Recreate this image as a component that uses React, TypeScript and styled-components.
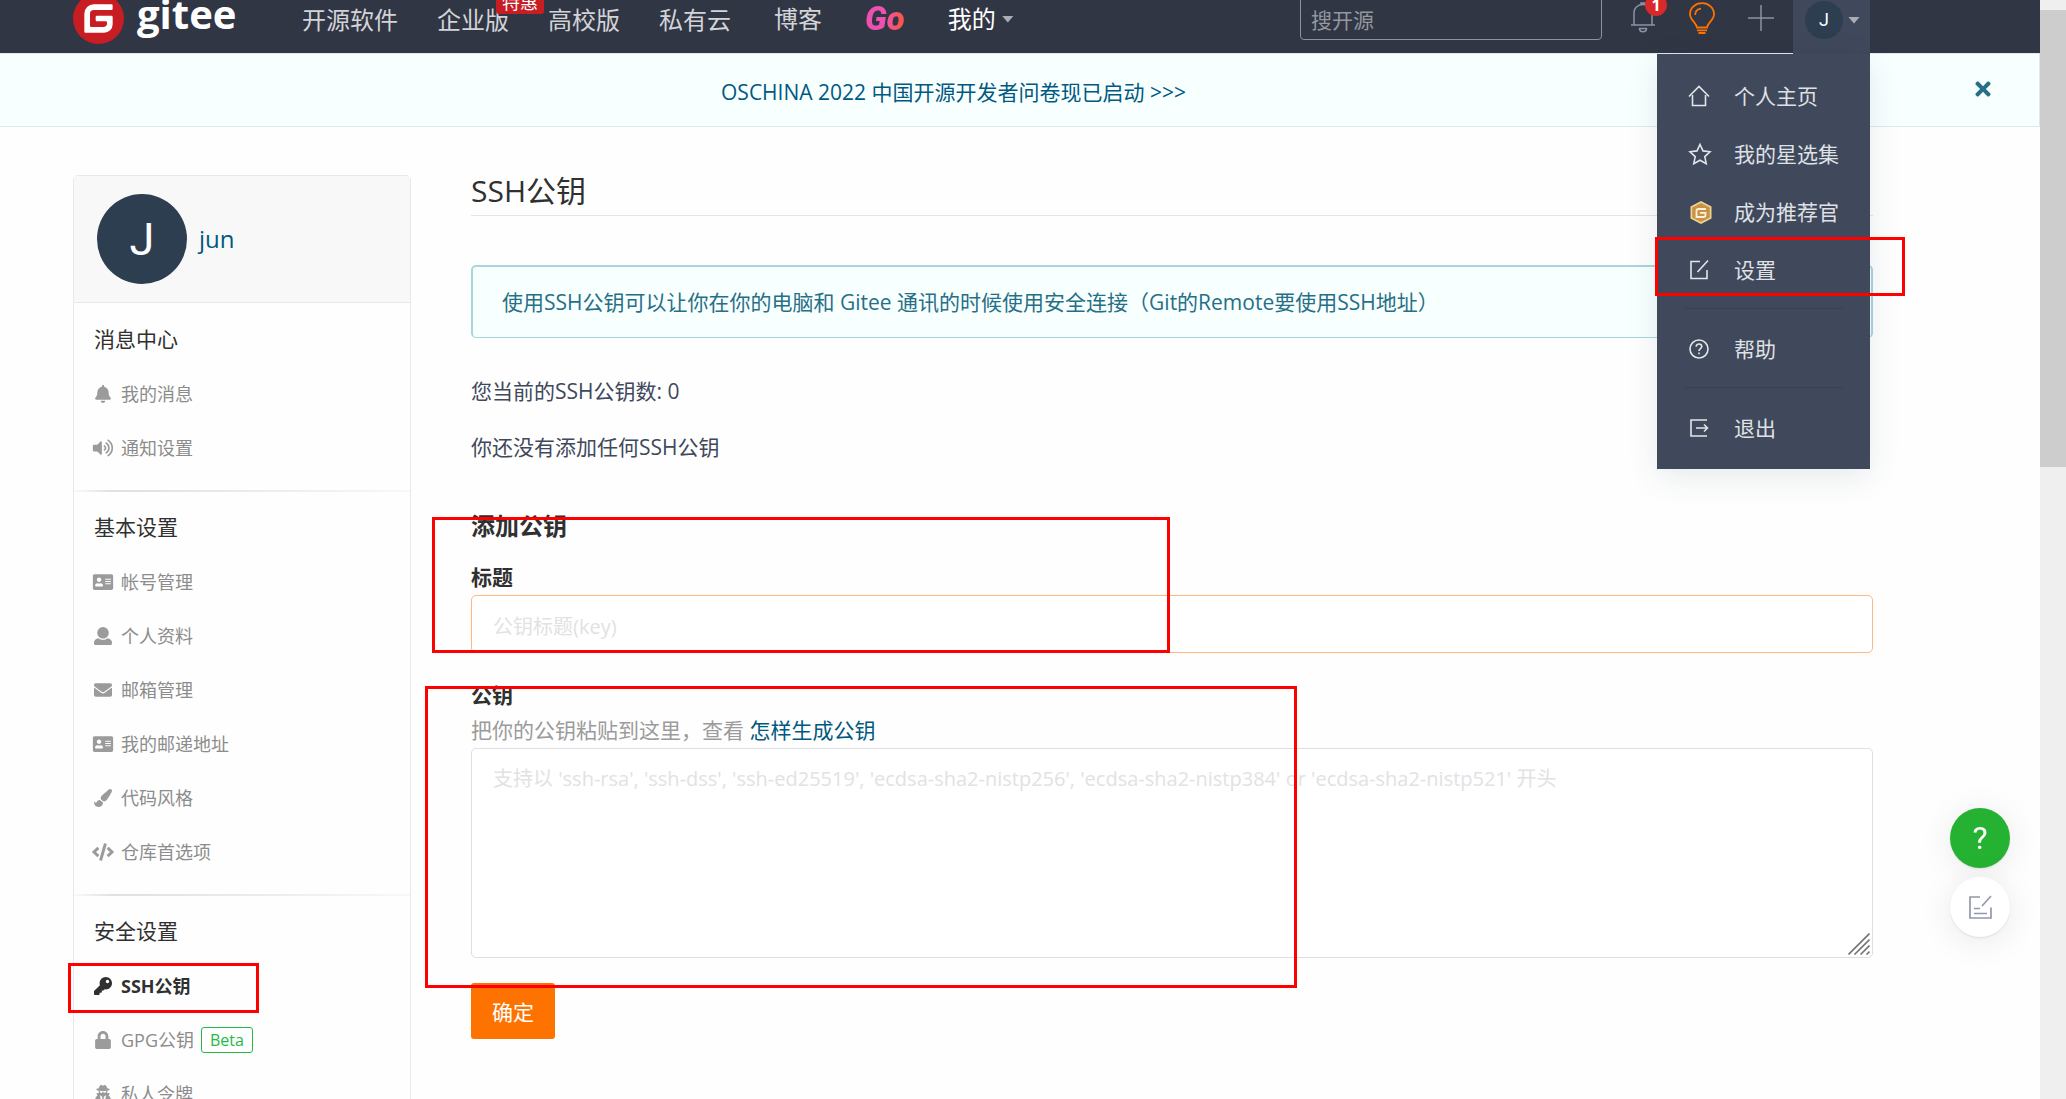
import React from 'react';
import styled, { createGlobalStyle, css } from 'styled-components';
import {
  FaBell,
  FaVolumeUp,
  FaAddressCard,
  FaEnvelope,
  FaPaintBrush,
  FaCode,
  FaKey,
  FaLock,
  FaUserSecret,
  FaTimes,
} from 'react-icons/fa';

const GlobalStyle = createGlobalStyle`
  *, *::before, *::after { box-sizing: border-box; }
  html, body { margin: 0; }
  body {
    background: #fefefe;
    color: #40485b;
    font-family: "Open Sans", "Noto Sans CJK SC", sans-serif;
    font-size: 21px;
    line-height: 32px;
    overflow: hidden;
  }
  a { color: inherit; text-decoration: none; }
  button, input, textarea { font: inherit; }
  h1, h2, h3, p, ul { margin: 0; padding: 0; }
  ul { list-style: none; }
`;

const Window = styled.div`
  display: flex;
  height: 100vh;
  overflow: hidden;
`;

const Page = styled.div`
  flex: 1;
  min-width: 0;
  height: 100%;
  overflow: hidden;
`;

/* ---------- scroll bar ---------- */

const ScrollTrack = styled.div`
  width: 26px;
  flex: none;
  background: #efefef;
  padding-top: 10px;
`;

const ScrollThumb = styled.div`
  height: 457px;
  background: #cdcdcd;
`;

/* ---------- header ---------- */

const Header = styled.header`
  height: 53px;
  padding: 0 170px 0 73px;
  display: flex;
  align-items: flex-end;
  background: #313644;
`;

const HeaderRow = styled.div`
  flex: 1;
  height: 70px;
  display: flex;
  align-items: center;
`;

const Brand = styled.a`
  display: flex;
  align-items: center;
  gap: 13px;
  width: 229px;
  color: #fff;
  font-weight: 700;
  font-size: 40px;
  line-height: 54px;

  svg { width: 51px; height: 51px; }
  span { padding-bottom: 8px; }
`;

const NavGroup = styled.nav<{ $gap: number }>`
  display: flex;
  align-items: center;
  gap: ${(p) => p.$gap}px;
  padding-top: 2px;
`;

const NavLink = styled.a<{ $active?: boolean }>`
  position: relative;
  display: flex;
  align-items: center;
  gap: 6px;
  font-size: 24px;
  line-height: 36px;
  white-space: nowrap;
  color: ${(p) => (p.$active ? '#fff' : '#d2d4d8')};
`;

const Promo = styled.span`
  position: absolute;
  right: -35px;
  top: -12px;
  padding: 0 6px;
  border-radius: 3px;
  background: #c71d23;
  color: #fff;
  font-size: 18px;
  line-height: 24px;
`;

const GoLink = styled.a`
  font-family: Roboto, sans-serif;
  font-style: italic;
  font-weight: 900;
  font-size: 33px;
  line-height: 36px;
  color: transparent;
  background: linear-gradient(95deg, #ee50b0 50%, #f8574a 90%);
  background-clip: text;
  -webkit-background-clip: text;
`;

const Caret = styled.span`
  width: 12px;
  height: 7px;
  background: #a9adb8;
  clip-path: polygon(0 0, 100% 0, 50% 100%);
`;

const HeaderTools = styled.div`
  display: flex;
  align-items: center;
  height: 100%;
  margin-left: auto;
`;

const Search = styled.input`
  width: 302px;
  height: 44px;
  margin-right: 29px;
  padding: 3px 10px 0;
  border: 1px solid #8c92a4;
  border-radius: 4px;
  background: transparent;
  color: #fff;
  outline: none;

  &::placeholder { color: #93979f; opacity: 1; }
`;

const ToolButton = styled.button<{ $after: number }>`
  position: relative;
  display: flex;
  margin: 0 ${(p) => p.$after}px 0 0;
  padding: 0;
  border: 0;
  background: none;
  color: #8c92a4;
  cursor: pointer;
`;

const Count = styled.span`
  position: absolute;
  right: -12px;
  top: -8px;
  width: 22px;
  height: 22px;
  border-radius: 11px;
  background: #db2828;
  color: #fff;
  font-weight: 700;
  font-size: 16px;
  line-height: 22px;
  text-align: center;
`;

const UserArea = styled.div`
  position: relative;
  align-self: stretch;
`;

const UserButton = styled.button`
  display: flex;
  align-items: center;
  gap: 5px;
  height: 71px;
  width: 77px;
  padding: 3px 0 0 12px;
  border: 0;
  background: #40485b;
  cursor: pointer;
`;

const Avatar = styled.span<{ $size: number; $font: number }>`
  display: flex;
  flex: none;
  align-items: center;
  justify-content: center;
  width: ${(p) => p.$size}px;
  height: ${(p) => p.$size}px;
  border-radius: 50%;
  background: #2c3e50;
  color: #fff;
  font-family: Roboto, sans-serif;
  font-size: ${(p) => p.$font}px;
  line-height: 1;
`;

const Menu = styled.ul`
  position: absolute;
  z-index: 5;
  top: 71px;
  right: 0;
  width: 213px;
  padding: 13px 0 12px;
  background: #40485b;
  box-shadow: 0 8px 30px rgba(0, 60, 80, 0.1);
`;

const MenuItem = styled.li`
  position: relative;

  a {
    display: flex;
    align-items: center;
    gap: 22px;
    height: 58px;
    padding-left: 31px;
    color: #dfe1e5;
    white-space: nowrap;
  }
  svg { width: 24px; height: 24px; flex: none; }
`;

const MenuDivider = styled.li`
  height: 1px;
  margin: 9px 27px 11px;
  background: #384256;
`;

/* ---------- banner ---------- */

const Banner = styled.div`
  display: flex;
  align-items: center;
  height: 74px;
  padding: 0 45px 0 64px;
  border: 1px solid #e0e8ec;
  border-left: 0;
  background: #f8ffff;
  color: #005980;

  a { flex: 1; text-align: center; padding-right: 129px; padding-top: 3px; }
`;

const CloseButton = styled.button`
  display: flex;
  padding: 0 0 2px;
  border: 0;
  background: none;
  color: #276f86;
  font-size: 22px;
  cursor: pointer;
`;

/* ---------- body ---------- */

const Body = styled.div`
  display: flex;
  align-items: flex-start;
  gap: 60px;
  padding: 48px 167px 0 73px;
`;

const Sidebar = styled.aside`
  width: 338px;
  flex: none;
  border: 1px solid #e3e9ed;
  border-radius: 5px 5px 0 0;
`;

const Profile = styled.a`
  display: flex;
  align-items: center;
  gap: 12px;
  height: 127px;
  padding-left: 23px;
  border-bottom: 1px solid #e3e9ed;
  background: #f8f8f8;
  color: #005980;
  font-size: 24px;
`;

const SideSection = styled.section`
  padding: 8px 0 15px;

  & + & {
    padding-top: 7px;
    border-top: 2px solid;
    border-image: linear-gradient(90deg, #fafafa, #e0e0e0 12%, #f8f8f8) 1;
  }
`;

const SideTitle = styled.h3`
  padding: 0 20px;
  color: #303030;
  font-weight: 400;
  font-size: 21px;
  line-height: 56px;
`;

const SideLink = styled.a<{ $active?: boolean }>`
  display: flex;
  align-items: center;
  height: 54px;
  padding-left: 18px;
  color: ${(p) => (p.$active ? '#303030' : '#8c8c8c')};
  font-size: 18px;
  font-weight: ${(p) => (p.$active ? 700 : 400)};

  svg {
    width: 22px;
    height: 18px;
    margin-right: 7px;
    color: ${(p) => (p.$active ? '#303030' : '#9b9b9b')};
  }
`;

const Beta = styled.span`
  margin-left: 7px;
  padding: 0 8px;
  border: 1px solid #21ba45;
  border-radius: 3px;
  color: #21ba45;
  font-size: 16px;
  line-height: 24px;
`;

const Main = styled.main`
  flex: 1;
  min-width: 0;
`;

const PageTitle = styled.h1`
  height: 41px;
  border-bottom: 1px solid #e4e5e7;
  color: #303030;
  font-weight: 400;
  font-size: 30px;
  line-height: 32px;
`;

const Notice = styled.div`
  margin: 49px 0 37px;
  padding: 19px 29px;
  border: 2px solid #a9d5de;
  border-bottom-width: 1px;
  border-radius: 5px;
  background: #f8ffff;
  color: #276f86;
`;

const Info = styled.p`
  height: 32px;
  margin-bottom: 24px;
`;

const FormTitle = styled.h2`
  margin: 47px 0 17px;
  color: #303030;
  font-weight: 700;
  font-size: 24px;
  line-height: 32px;
`;

const Field = styled.div<{ $gap: number }>`
  position: relative;
  display: flex;
  flex-direction: column;
  margin-bottom: ${(p) => p.$gap}px;
`;

const Label = styled.label`
  color: #303030;
  font-weight: 700;
  line-height: 36px;
`;

const Hint = styled.p`
  color: #9b9b9b;
  line-height: 35px;

  a { color: #005980; }
`;

const box = css`
  width: 100%;
  border-radius: 5px;
  background: #fff;
  color: #40485b;
  font-size: 20px;
  outline: none;

  &::placeholder { color: #e1e2e4; opacity: 1; }
`;

const TextInput = styled.input`
  ${box}
  height: 58px;
  padding: 4px 21px 0;
  border: 1px solid #ffb77f;
`;

const TextArea = styled.textarea`
  ${box}
  display: block;
  height: 210px;
  padding: 14px 21px;
  border: 1px solid #dddfe4;
  resize: none;
`;

const Grip = styled.svg`
  position: absolute;
  right: 3px;
  bottom: 3px;
  width: 22px;
  height: 22px;
`;

const Submit = styled.button`
  display: block;
  height: 56px;
  padding: 2px 21px 0;
  border: 0;
  border-radius: 3px;
  background: #fe7300;
  color: #fff;
  cursor: pointer;
`;

/* ---------- red markers over the content ---------- */

const Marker = styled.span<{ $top: number; $left: number; $width: number; $height: number }>`
  position: absolute;
  z-index: 6;
  top: ${(p) => p.$top}px;
  left: ${(p) => p.$left}px;
  width: ${(p) => p.$width}px;
  height: ${(p) => p.$height}px;
  border: 3px solid #ff0000;
  pointer-events: none;
`;

const Anchor = styled.div`
  position: relative;
`;

/* ---------- floating buttons ---------- */

const Floating = styled.div`
  position: fixed;
  right: 56px;
  bottom: 162px;
  display: flex;
  flex-direction: column;
  gap: 9px;
`;

const RoundButton = styled.button<{ $green?: boolean }>`
  display: flex;
  align-items: center;
  justify-content: center;
  width: 60px;
  height: 60px;
  padding: 0;
  border: 0;
  border-radius: 50%;
  background: ${(p) => (p.$green ? '#25b232' : '#fff')};
  color: ${(p) => (p.$green ? '#fff' : '#9398ab')};
  font-family: Roboto, sans-serif;
  font-size: 32px;
  box-shadow: 0 1px 2px rgba(0, 0, 0, 0.1), 0 4px 34px rgba(0, 0, 0, 0.09);
  cursor: pointer;
`;

/* ---------- drawings ---------- */

const GiteeMark = () => (
  <svg viewBox="0 0 1024 1024" aria-hidden="true">
    <circle cx="512" cy="512" r="512" fill="#c71d23" />
    <path
      fill="#fff"
      d="M771.149 455.117h-290.74a25.293 25.293 0 0 0-25.292 25.293l-.026 63.206c0 13.952 11.315 25.293 25.267 25.293h177.024c13.978 0 25.293 11.315 25.293 25.267v12.646a75.853 75.853 0 0 1-75.853 75.853h-240.23a25.293 25.293 0 0 1-25.267-25.293V417.203a75.853 75.853 0 0 1 75.827-75.853h353.946a25.293 25.293 0 0 0 25.267-25.292l.077-63.207a25.293 25.293 0 0 0-25.268-25.293H417.152a189.62 189.62 0 0 0-189.62 189.645V771.15c0 13.977 11.316 25.293 25.294 25.293h372.94a170.65 170.65 0 0 0 170.65-170.65V480.384a25.293 25.293 0 0 0-25.293-25.267z"
    />
  </svg>
);

const BellIcon = () => (
  <svg width="24" height="32" viewBox="0 0 24 32" fill="none" stroke="currentColor" strokeWidth="1.5" aria-hidden="true">
    <path d="M0 23h24M3 23V11C3 5.500 7 2.500 12 2.500S21 5.500 21 11v12M10 2.500V1h4v1.500M8.500 26.500h7c0 2-1.500 3.200-3.500 3.200s-3.500-1.200-3.500-3.200z" />
  </svg>
);

const BulbIcon = () => (
  <svg width="28" height="32" viewBox="0 0 28 32" fill="none" stroke="#fe7300" strokeWidth="1.8" aria-hidden="true">
    <path d="M9 25.500C8.500 21 2 18 2 12.200 2 5.800 7.200 1.200 14 1.200S26 5.800 26 12.200C26 18 19.500 21 19 25.500z" />
    <path d="M7.200 13C7.200 9.500 9.500 7 13 6.600M9 28.300h10M10.500 31h7" />
  </svg>
);

const PlusIcon = () => (
  <svg width="26" height="28" viewBox="0 0 26 28" stroke="currentColor" strokeWidth="1.5" aria-hidden="true">
    <path d="M13 1v26M0 14h26" />
  </svg>
);

const UserIcon = () => (
  <svg viewBox="0 0 18 18" fill="currentColor" aria-hidden="true">
    <circle cx="9" cy="5.800" r="5.800" />
    <path d="M4.500 11.200c2.600 2 6.400 2 9 0 2.600.3 4.500 2 4.500 4.300V16.500q0 1.500-1.500 1.500h-15Q0 18 0 16.500V15.500c0-2.300 1.900-4 4.500-4.300z" />
  </svg>
);

const line = { viewBox: '0 0 24 24', fill: 'none', stroke: '#e3e5e9', strokeWidth: 1.6, 'aria-hidden': true } as const;

const HomeIcon = () => (
  <svg {...line}>
    <path d="M1 12.500L11 2.500l10 10M4.500 11v10.500h13V11" />
  </svg>
);

const StarIcon = () => (
  <svg {...line}>
    <path d="M12 2.500l3 6.400 7 .9-5.200 4.800 1.400 7L12 18.200l-6.200 3.400 1.400-7L2 9.800l7-.9z" />
  </svg>
);

const HexIcon = () => (
  <svg viewBox="0 0 24 24" aria-hidden="true">
    <path d="M13 1l10.500 5.500v12L13 24 2.500 18.500v-12z" fill="#f0d48c" />
    <path d="M13 3l8.800 4.500v10L13 22l-8.800-4.500v-10z" fill="#c8924a" />
    <path d="M18 9h-7.500Q8.500 9 8.500 11v6h7q2 0 2-2v-2.200h-5.500" fill="none" stroke="#fff2d4" strokeWidth="1.8" />
  </svg>
);

const EditIcon = () => (
  <svg {...line}>
    <path d="M12 3.500H3v17h16V12M9.500 14L20 2.500" />
  </svg>
);

const HelpIcon = () => (
  <svg {...line}>
    <circle cx="11" cy="12" r="9" />
    <path d="M8.200 9.800C8.200 8 9.400 7 11 7s2.800 1 2.800 2.600c0 1.900-2.800 2.200-2.800 4.400M11 15.500v1.800" />
  </svg>
);

const ExitIcon = () => (
  <svg {...line}>
    <path d="M19 4H3v16h16M8 12h11.500M16 8.500l3.500 3.500-3.500 3.500" />
  </svg>
);

const FeedbackIcon = () => (
  <svg width="26" height="26" viewBox="0 0 26 26" fill="none" stroke="currentColor" strokeWidth="1.700" aria-hidden="true">
    <path d="M13 3H3v21h21V13.500M15 12l9-10M7 14.500h6M7 19.500h13" />
  </svg>
);

/* ---------- data ---------- */

type SideItem = { label: string; icon: React.ComponentType; active?: boolean; beta?: boolean };

const sections: { title: string; items: SideItem[] }[] = [
  {
    title: '消息中心',
    items: [
      { label: '我的消息', icon: FaBell },
      { label: '通知设置', icon: FaVolumeUp },
    ],
  },
  {
    title: '基本设置',
    items: [
      { label: '帐号管理', icon: FaAddressCard },
      { label: '个人资料', icon: UserIcon },
      { label: '邮箱管理', icon: FaEnvelope },
      { label: '我的邮递地址', icon: FaAddressCard },
      { label: '代码风格', icon: FaPaintBrush },
      { label: '仓库首选项', icon: FaCode },
    ],
  },
  {
    title: '安全设置',
    items: [
      { label: 'SSH公钥', icon: FaKey, active: true },
      { label: 'GPG公钥', icon: FaLock, beta: true },
      { label: '私人令牌', icon: FaUserSecret },
    ],
  },
];

export default function App() {
  return (
    <>
      <GlobalStyle />
      <Window>
        <Page>
          <Header>
            <HeaderRow>
              <Brand href="#">
                <GiteeMark />
                <span>gitee</span>
              </Brand>
              <NavGroup $gap={43}>
                <NavGroup as="div" $gap={39}>
                  <NavLink href="#">开源软件</NavLink>
                  <NavLink href="#">
                    企业版<Promo>特惠</Promo>
                  </NavLink>
                  <NavLink href="#">高校版</NavLink>
                  <NavLink href="#">私有云</NavLink>
                </NavGroup>
                <NavLink href="#">博客</NavLink>
                <GoLink href="#">Go</GoLink>
                <NavLink href="#" $active>
                  我的
                  <Caret />
                </NavLink>
              </NavGroup>
              <HeaderTools>
                <Search type="search" placeholder="搜开源" aria-label="搜开源" />
                <ToolButton $after={33} aria-label="通知">
                  <BellIcon />
                  <Count>1</Count>
                </ToolButton>
                <ToolButton $after={32} aria-label="动态">
                  <BulbIcon />
                </ToolButton>
                <ToolButton $after={19} aria-label="新建">
                  <PlusIcon />
                </ToolButton>
                <UserArea>
                  <UserButton aria-label="用户菜单">
                    <Avatar $size={38} $font={18}>J</Avatar>
                    <Caret />
                  </UserButton>
                  <Menu>
                    <MenuItem><a href="#"><HomeIcon />个人主页</a></MenuItem>
                    <MenuItem><a href="#"><StarIcon />我的星选集</a></MenuItem>
                    <MenuItem><a href="#"><HexIcon />成为推荐官</a></MenuItem>
                    <MenuItem>
                      <a href="#"><EditIcon />设置</a>
                      <Marker $top={-4} $left={-2} $width={250} $height={59} />
                    </MenuItem>
                    <MenuDivider />
                    <MenuItem><a href="#"><HelpIcon />帮助</a></MenuItem>
                    <MenuDivider />
                    <MenuItem><a href="#"><ExitIcon />退出</a></MenuItem>
                  </Menu>
                </UserArea>
              </HeaderTools>
            </HeaderRow>
          </Header>

          <Banner>
            <a href="#">OSCHINA 2022 中国开源开发者问卷现已启动 &gt;&gt;&gt;</a>
            <CloseButton aria-label="关闭"><FaTimes /></CloseButton>
          </Banner>

          <Body>
            <Sidebar>
              <Profile href="#">
                <Avatar $size={90} $font={45}>J</Avatar>
                jun
              </Profile>
              {sections.map((section) => (
                <SideSection key={section.title}>
                  <SideTitle>{section.title}</SideTitle>
                  {section.items.map(({ label, icon: Icon, active, beta }) => (
                    <Anchor key={label}>
                      <SideLink href="#" $active={active}>
                        <Icon />
                        {label}
                        {beta && <Beta>Beta</Beta>}
                      </SideLink>
                      {active && <Marker $top={4} $left={-6} $width={191} $height={50} />}
                    </Anchor>
                  ))}
                </SideSection>
              ))}
            </Sidebar>

            <Main>
              <PageTitle>SSH公钥</PageTitle>
              <Notice>使用SSH公钥可以让你在你的电脑和 Gitee 通讯的时候使用安全连接（Git的Remote要使用SSH地址）</Notice>
              <Info>您当前的SSH公钥数: 0</Info>
              <Info>你还没有添加任何SSH公钥</Info>
              <FormTitle>添加公钥</FormTitle>
              <Field $gap={24}>
                <Label htmlFor="key-title">标题</Label>
                <TextInput id="key-title" placeholder="公钥标题(key)" />
                <Marker $top={-42} $left={-39} $width={738} $height={136} />
              </Field>
              <Field $gap={25}>
                <Label htmlFor="key-body">公钥</Label>
                <Hint>
                  把你的公钥粘贴到这里，查看 <a href="#">怎样生成公钥</a>
                </Hint>
                <TextArea
                  id="key-body"
                  placeholder="支持以 'ssh-rsa', 'ssh-dss', 'ssh-ed25519', 'ecdsa-sha2-nistp256', 'ecdsa-sha2-nistp384' or 'ecdsa-sha2-nistp521' 开头"
                />
                <Grip viewBox="0 0 22 22" stroke="#757575" strokeWidth="1.600" aria-hidden="true">
                  <path d="M0.500 21.500L21.500 0.500M6.500 21.500l15-15M12.500 21.500l9-9M18.500 21.500l3-3" />
                </Grip>
                <Marker $top={9} $left={-46} $width={872} $height={302} />
              </Field>
              <Submit type="submit">确定</Submit>
            </Main>
          </Body>
        </Page>
        <ScrollTrack>
          <ScrollThumb />
        </ScrollTrack>
      </Window>

      <Floating>
        <RoundButton $green aria-label="帮助">?</RoundButton>
        <RoundButton aria-label="反馈"><FeedbackIcon /></RoundButton>
      </Floating>
    </>
  );
}
